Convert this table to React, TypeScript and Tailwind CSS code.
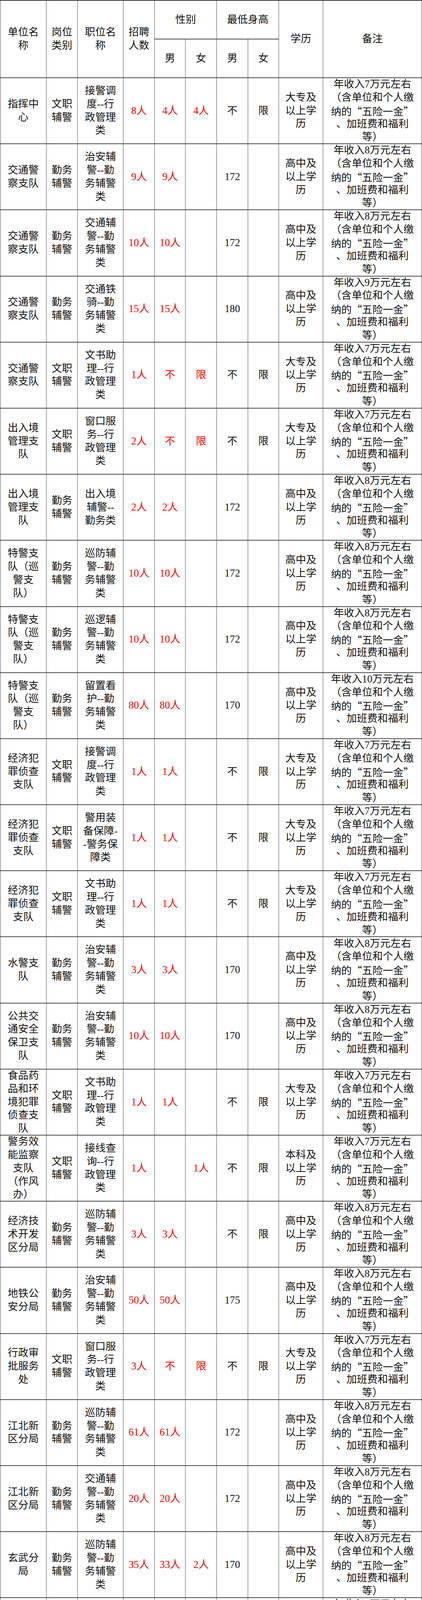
import React from 'react';

// 单位, 岗位, 职位, 招聘, 男, 女, 身高男, 身高女, 学历, 年收入(万)
type Row = [string, string, string, string, string, string, string, string, string, string];

const XF = '巡防辅/警--勤/务辅警/类';
const ZA = '治安辅/警--勤/务辅警/类';
const WS = '文书助/理--行/政管理/类';
const CK = '窗口服/务--行/政管理/类';
const JJ = '接警调/度--行/政管理/类';
const QW = '勤务/辅警';
const WZ = '文职/辅警';

const EDU: Record<string, string> = {
  d: '大专及/以上学/历',
  g: '高中及/以上学/历',
  b: '本科及/以上学/历',
};

const rows: Row[] = [
  ['指挥中/心', WZ, JJ, '8人', '4人', '4人', '不', '限', 'd', '7'],
  ['交通警/察支队', QW, ZA, '9人', '9人', '', '172', '', 'g', '8'],
  ['交通警/察支队', QW, '交通辅/警--勤/务辅警/类', '10人', '10人', '', '172', '', 'g', '8'],
  ['交通警/察支队', QW, '交通铁/骑--勤/务辅警/类', '15人', '15人', '', '180', '', 'g', '9'],
  ['交通警/察支队', WZ, WS, '1人', '不', '限', '不', '限', 'd', '7'],
  ['出入境/管理支/队', WZ, CK, '2人', '不', '限', '不', '限', 'd', '7'],
  ['出入境/管理支/队', QW, '出入境/辅警--/勤务类', '2人', '2人', '', '172', '', 'g', '8'],
  ['特警支/队（巡/警支/队）', QW, XF, '10人', '10人', '', '172', '', 'g', '8'],
  ['特警支/队（巡/警支/队）', QW, '巡逻辅/警--勤/务辅警/类', '10人', '10人', '', '172', '', 'g', '8'],
  ['特警支/队（巡/警支/队）', QW, '留置看/护--勤/务辅警/类', '80人', '80人', '', '170', '', 'g', '10'],
  ['经济犯/罪侦查/支队', WZ, JJ, '1人', '1人', '', '不', '限', 'd', '7'],
  ['经济犯/罪侦查/支队', WZ, '警用装/备保障-/-警务保/障类', '1人', '1人', '', '不', '限', 'd', '7'],
  ['经济犯/罪侦查/支队', WZ, WS, '1人', '1人', '', '不', '限', 'd', '7'],
  ['水警支/队', QW, ZA, '3人', '3人', '', '170', '', 'g', '8'],
  ['公共交/通安全/保卫支/队', QW, ZA, '10人', '10人', '', '170', '', 'g', '8'],
  ['食品药/品和环/境犯罪/侦查支/队', WZ, WS, '1人', '1人', '', '不', '限', 'd', '7'],
  ['警务效/能监察/支队/（作风/办）', WZ, '接线查/询--行/政管理/类', '1人', '', '1人', '不', '限', 'b', '7'],
  ['经济技/术开发/区分局', QW, XF, '3人', '3人', '', '不', '限', 'g', '8'],
  ['地铁公/安分局', QW, ZA, '50人', '50人', '', '175', '', 'g', '8'],
  ['行政审/批服务/处', WZ, CK, '3人', '不', '限', '不', '限', 'd', '7'],
  ['江北新/区分局', QW, XF, '61人', '61人', '', '172', '', 'g', '8'],
  ['江北新/区分局', QW, '交通辅/警--勤/务辅警/类', '20人', '20人', '', '172', '', 'g', '8'],
  ['玄武分/局', QW, XF, '35人', '33人', '2人', '170', '', 'g', '8'],
  ['秦淮分/局', QW, XF, '20人', '20人', '', '170', '', 'g', '8'],
  ['建邺分/局', QW, XF, '18人', '15人', '3人', '172', '160', 'g', '8'],
  ['鼓楼分/局', QW, XF, '60人', '55人', '5人', '不', '限', 'g', '8'],
  ['雨花台/分局', QW, ZA, '1人', '1人', '', '不', '限', 'g', '7'],
  ['雨花台/分局', QW, XF, '50人', '50人', '', '不', '限', 'g', '8'],
  ['雨花台/分局', QW, '社区协/管员--/勤务类', '7人', '7人', '', '不', '限', 'g', '7'],
  ['雨花台/分局', WZ, '材料助/理--行/政管理/类', '1人', '', '1人', '不', '限', 'b', '7'],
  ['浦口分/局', QW, XF, '37人', '37人', '', '不', '限', 'g', '8'],
];

// quotes drawn with the CJK face so they come out full width like the original
const withQuotes = (line: string) =>
  line.split(/([“”])/).map((part, i) =>
    part === '“' || part === '”' ? (
      <span key={i} className="font-['Noto_Sans_CJK_SC',sans-serif]">{part}</span>
    ) : (
      part
    )
  );

const Lines: React.FC<{ text: string }> = ({ text }) => (
  <>
    {text.split('/').map((line, i) => (
      <div key={i} className="h-[33.8px] whitespace-nowrap">
        {withQuotes(line)}
      </div>
    ))}
  </>
);

const Cell: React.FC<{ text: string; red?: boolean; className?: string }> = ({ text, red, className = '' }) => (
  <div
    className={`flex flex-col items-center justify-center overflow-hidden bg-white text-center ${
      red ? 'text-[#ff0000]' : 'text-[#111]'
    } ${className}`}
  >
    {text && <Lines text={text} />}
  </div>
);

const note = (w: string) => `年收入${w}万元左右/（含单位和个人缴/纳的“五险一金”/、加班费和福利/等）`;

const App: React.FC = () => {
  return (
    <div className="w-[1080px] bg-white font-['Liberation_Serif','Noto_Sans_CJK_SC',serif] text-[26.5px] leading-[33.8px]">
      <div className="grid grid-cols-[117px_79px_116px_79px_78px_79px_79px_78px_112px_252px] grid-rows-[97px_97px_repeat(31,167.2px)] gap-x-px gap-y-[2px] border-x border-y-2 border-[#3a3a3a] bg-[#4a4a4a]">
        {/* header */}
        <Cell text="单位名/称" className="row-span-2" />
        <Cell text="岗位/类别" className="row-span-2" />
        <Cell text="职位名/称" className="row-span-2" />
        <Cell text="招聘/人数" className="row-span-2" />
        <Cell text="性别" className="col-span-2" />
        <Cell text="最低身高" className="col-span-2" />
        <Cell text="学历" className="row-span-2" />
        <Cell text="备注" className="row-span-2" />
        <Cell text="男" />
        <Cell text="女" />
        <Cell text="男" />
        <Cell text="女" />

        {rows.map((r, i) => (
          <React.Fragment key={i}>
            <Cell text={r[0]} />
            <Cell text={r[1]} />
            <Cell text={r[2]} />
            <Cell text={r[3]} red />
            <Cell text={r[4]} red />
            <Cell text={r[5]} red />
            <Cell text={r[6]} />
            <Cell text={r[7]} />
            <Cell text={EDU[r[8]]} />
            <Cell text={note(r[9])} />
          </React.Fragment>
        ))}
      </div>
    </div>
  );
};

export default App;
